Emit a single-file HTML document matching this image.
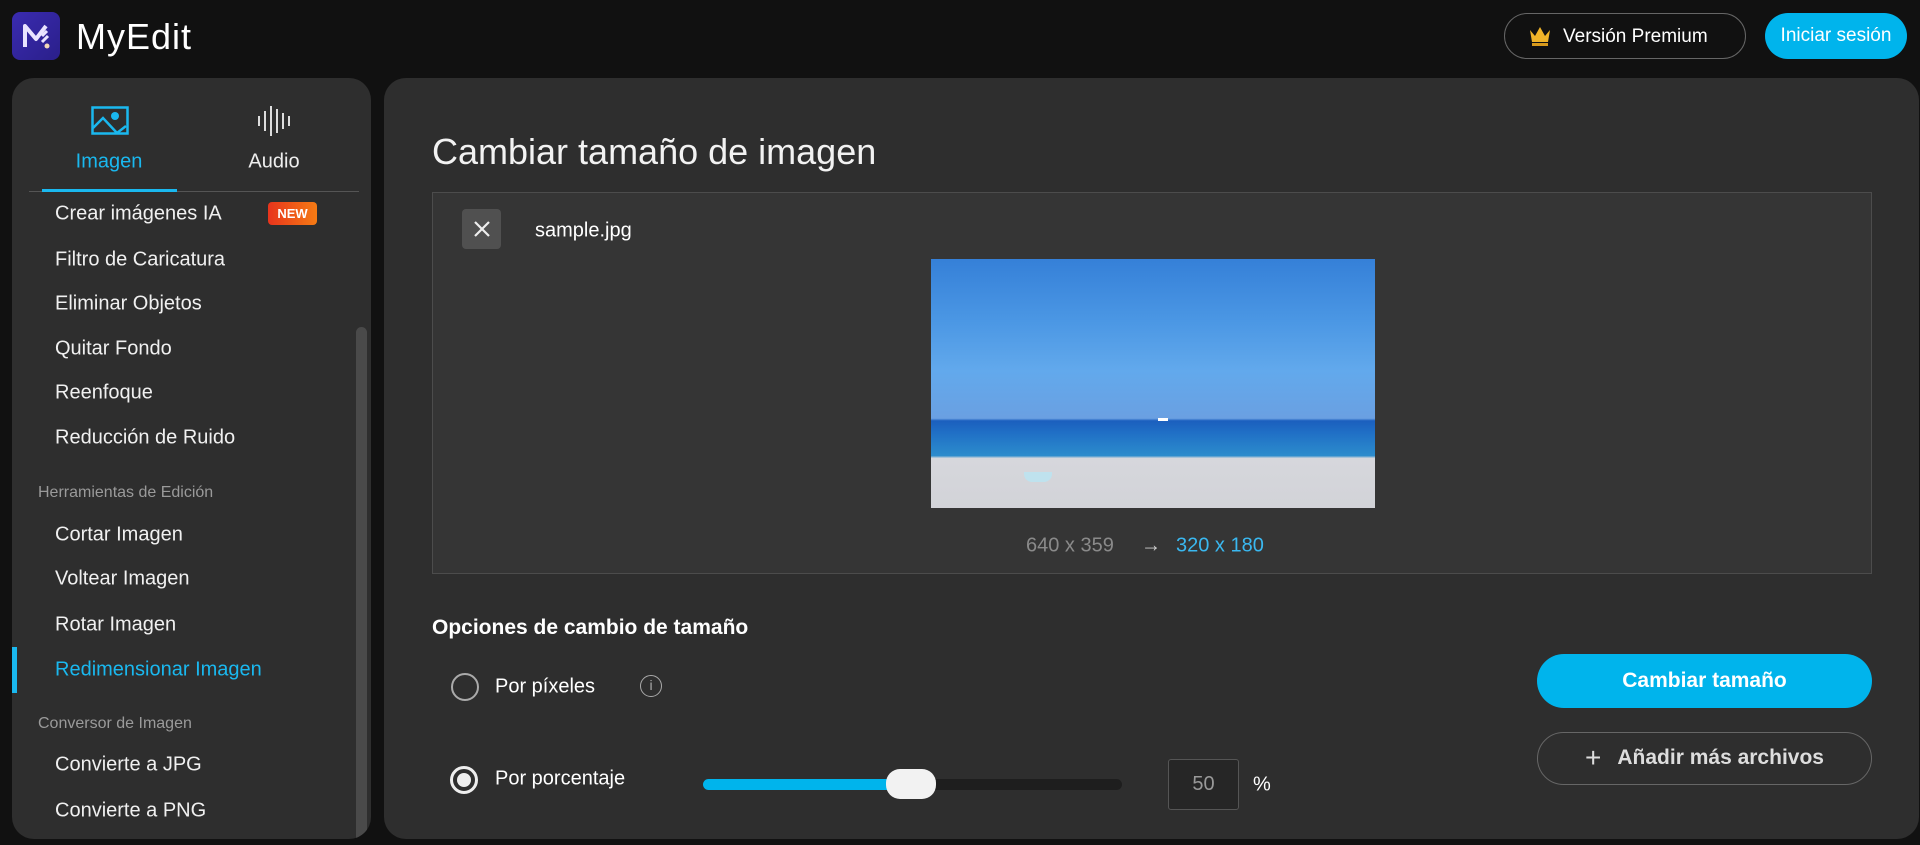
<!DOCTYPE html>
<html><head><meta charset="utf-8"><style>
*{box-sizing:border-box;margin:0;padding:0}
body{width:1920px;height:845px;background:#111;font-family:"Liberation Sans",sans-serif;color:#fff;position:relative;overflow:hidden}
.a{position:absolute}
.side{left:12px;top:78px;width:359px;height:761px;background:#2e2e2e;border-radius:22px;overflow:hidden}
.main{left:384px;top:78px;width:1535px;height:761px;background:#2e2e2e;border-radius:22px}
.mi{position:absolute;left:43px;font-size:20px;color:#f0f0f0;transform:translateY(-50%)}
.sec{position:absolute;left:26px;font-size:16px;color:#9a9a9a;transform:translateY(-50%)}
.t{transform:translateY(-50%)}
</style></head><body>
<div class="a" style="left:12px;top:12px;width:48px;height:48px;border-radius:8px;background:linear-gradient(135deg,#3a2bb0,#2a1f8a)"></div>
<svg class="a" style="left:12px;top:12px" width="48" height="48" viewBox="0 0 48 48"><path d="M13 35V14l11 13 10-13" stroke="#e9e3ff" stroke-width="4" fill="none" stroke-linejoin="round"/><path d="M30 30l6-6M30 24l5-5" stroke="#e9e3ff" stroke-width="3"/><circle cx="35" cy="34" r="2.5" fill="#f2d8b8"/></svg>
<div class="a t" style="left:76px;top:37px;font-size:36px;color:#fff;letter-spacing:1px">MyEdit</div>
<div class="a" style="left:1504px;top:13px;width:242px;height:46px;border:1.5px solid #666;border-radius:23px"></div>
<svg class="a" style="left:1528px;top:25px" width="24" height="22" viewBox="0 0 24 22"><path d="M2 5l5 6 5-9 5 9 5-6-2 12H4z" fill="#f0b429"/><rect x="4" y="18" width="16" height="3" fill="#d89a1c"/></svg>
<div class="a t" style="left:1563px;top:37px;font-size:19px">Versión Premium</div>
<div class="a" style="left:1765px;top:13px;width:142px;height:46px;background:#00b4ec;border-radius:23px;font-size:19px;text-align:center;line-height:46px">Iniciar sesión</div>
<div class="a side">
<svg class="a" style="left:79px;top:28px" width="38" height="30" viewBox="0 0 38 30"><rect x="1.5" y="1.5" width="35" height="26" fill="none" stroke="#1ab8ef" stroke-width="2.5"/><circle cx="24" cy="10" r="4" fill="#1ab8ef"/><path d="M2 22l10-10 14 15M26 27l9-7" stroke="#1ab8ef" stroke-width="2.5" fill="none"/></svg>
<svg class="a" style="left:244px;top:26px" width="38" height="34" viewBox="0 0 38 34"><g stroke="#ddd" stroke-width="2"><path d="M3 12v10M9 7v20M15 2v30M21 5v24M27 9v16M33 12v10"/></g></svg>
<div class="a t" style="left:97px;top:84px;font-size:20px;color:#1ab8ef;transform:translate(-50%,-50%)">Imagen</div>
<div class="a t" style="left:262px;top:84px;font-size:20px;color:#eee;transform:translate(-50%,-50%)">Audio</div>
<div class="a" style="left:17px;top:113px;width:330px;height:1px;background:#555"></div>
<div class="a" style="left:30px;top:111px;width:135px;height:3px;background:#1ab8ef"></div>
<div class="mi" style="top:136px">Crear imágenes IA</div>
<div class="a" style="left:256px;top:124px;width:49px;height:23px;border-radius:4px;background:linear-gradient(90deg,#e8341c,#f57b14);font-size:13px;font-weight:bold;text-align:center;line-height:23px">NEW</div>
<div class="mi" style="top:182px">Filtro de Caricatura</div>
<div class="mi" style="top:226px">Eliminar Objetos</div>
<div class="mi" style="top:271px">Quitar Fondo</div>
<div class="mi" style="top:315px">Reenfoque</div>
<div class="mi" style="top:360px">Reducción de Ruido</div>
<div class="sec" style="top:415px">Herramientas de Edición</div>
<div class="mi" style="top:457px">Cortar Imagen</div>
<div class="mi" style="top:501px">Voltear Imagen</div>
<div class="mi" style="top:547px">Rotar Imagen</div>
<div class="mi" style="top:592px;color:#1ab8ef">Redimensionar Imagen</div>
<div class="a" style="left:0;top:569px;width:5px;height:46px;background:#1ab8ef"></div>
<div class="sec" style="top:646px">Conversor de Imagen</div>
<div class="mi" style="top:687px">Convierte a JPG</div>
<div class="mi" style="top:733px">Convierte a PNG</div>
<div class="a" style="left:344px;top:249px;width:11px;height:520px;border-radius:6px;background:#4a4a4a"></div>
</div>
<div class="a main"></div>
<div class="a t" style="left:432px;top:152px;font-size:36px;color:#f2f2f2">Cambiar tamaño de imagen</div>
<div class="a" style="left:432px;top:192px;width:1440px;height:382px;border:1px solid #4c4c4c;background:#353535"></div>
<div class="a" style="left:462px;top:209px;width:39px;height:40px;border-radius:4px;background:#505050"></div>
<svg class="a" style="left:472px;top:219px" width="20" height="20"><path d="M3 3l14 14M17 3L3 17" stroke="#eee" stroke-width="2.2"/></svg>
<div class="a t" style="left:535px;top:231px;font-size:20px">sample.jpg</div>
<div class="a" style="left:931px;top:259px;width:444px;height:249px;background:linear-gradient(180deg,#3580d8 0%,#4b97e4 25%,#62a9ec 45%,#6aa0e2 64%,#1b5fbe 65%,#2070c6 70%,#2c8ccc 79%,#d6d7dc 80%,#d2d3d8 100%)"></div>
<div class="a" style="left:1024px;top:472px;width:28px;height:10px;border-radius:0 0 8px 8px;background:#bfe2ee"></div>
<div class="a" style="left:1158px;top:418px;width:10px;height:3px;background:#fff"></div>
<div class="a t" style="left:1026px;top:546px;font-size:20px;color:#8a8a8a">640 x 359</div>
<div class="a t" style="left:1141px;top:546px;font-size:20px;color:#ccc">→</div>
<div class="a t" style="left:1176px;top:546px;font-size:20px;color:#3ab8f0">320 x 180</div>
<div class="a t" style="left:432px;top:628px;font-size:21px;font-weight:bold">Opciones de cambio de tamaño</div>
<div class="a" style="left:451px;top:673px;width:28px;height:28px;border-radius:50%;border:2.5px solid #aaa"></div>
<div class="a t" style="left:495px;top:687px;font-size:20px">Por píxeles</div>
<div class="a" style="left:640px;top:675px;width:22px;height:22px;border-radius:50%;border:1.5px solid #aaa;color:#aaa;font-size:14px;text-align:center;line-height:19px">i</div>
<div class="a" style="left:450px;top:766px;width:28px;height:28px;border-radius:50%;border:3px solid #eee"></div>
<div class="a" style="left:457px;top:773px;width:14px;height:14px;border-radius:50%;background:#eee"></div>
<div class="a t" style="left:495px;top:779px;font-size:20px">Por porcentaje</div>
<div class="a" style="left:703px;top:779px;width:419px;height:11px;border-radius:6px;background:#1e1e1e"></div>
<div class="a" style="left:703px;top:779px;width:210px;height:11px;border-radius:6px;background:#00b4ec"></div>
<div class="a" style="left:886px;top:769px;width:50px;height:30px;border-radius:14px;background:#f2f2f2"></div>
<div class="a" style="left:1168px;top:759px;width:71px;height:51px;border:1px solid #555;border-radius:3px;background:#262626;font-size:20px;color:#999;text-align:center;line-height:49px">50</div>
<div class="a t" style="left:1253px;top:785px;font-size:20px">%</div>
<div class="a" style="left:1537px;top:654px;width:335px;height:54px;border-radius:27px;background:#00b4ec;font-size:21px;font-weight:bold;text-align:center;line-height:54px">Cambiar tamaño</div>
<div class="a" style="left:1537px;top:732px;width:335px;height:53px;border-radius:27px;border:1.5px solid #666;font-size:21px;font-weight:bold;color:#ddd;text-align:center;line-height:50px"><span style="font-weight:normal;font-size:28px;vertical-align:-3px;margin-right:16px">+</span>Añadir más archivos</div>
</body></html>
